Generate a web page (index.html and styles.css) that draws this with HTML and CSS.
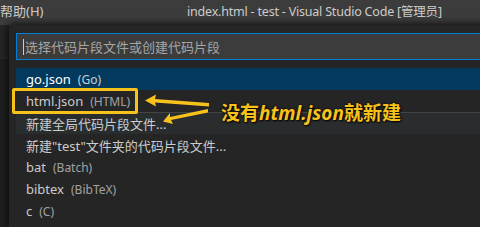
FILE: index.html
```html
<!DOCTYPE html>
<html lang="zh-CN">
<head>
<meta charset="utf-8">
<title>index.html - test - Visual Studio Code</title>
<link rel="stylesheet" href="styles.css">
</head>
<body>
<div class="titlebar">
  <span class="menu">帮助(H)</span>
  <span class="title">index.html - test - Visual Studio Code [管理员]</span>
</div>
<div class="main">
  <div class="editor-strip">
    <div class="tabs"></div>
  </div>
  <div class="quickpick">
    <div class="input"><span class="caret"></span><span class="placeholder">选择代码片段文件或创建代码片段</span></div>
    <ul class="list">
      <li class="row selected"><span class="label">go.json</span><span class="desc">(Go)</span></li>
      <li class="row"><span class="label">html.json</span><span class="desc">(HTML)</span></li>
      <li class="row hover sep"><span class="label">新建全局代码片段文件...</span></li>
      <li class="row"><span class="label">新建"test"文件夹的代码片段文件...</span></li>
      <li class="row"><span class="label">bat</span><span class="desc">(Batch)</span></li>
      <li class="row"><span class="label">bibtex</span><span class="desc">(BibTeX)</span></li>
      <li class="row"><span class="label">c</span><span class="desc">(C)</span></li>
    </ul>
  </div>
</div>
<div class="highlight-box"></div>
<svg class="arrows" width="480" height="227" viewBox="0 0 480 227">
  <polygon points="145,100.5 156,94.5 155,99 209,103 209,106.5 155,102.5 156,106.5" fill="#f8c21c"/>
  <polygon points="163,121.5 170,113 170,117 208,109 208,112.5 171,120 173,124" fill="#f8c21c"/>
</svg>
<div class="note">没有<i>html.json</i>就新建</div>
</body>
</html>
```
FILE: styles.css
```css
html, body {
  margin: 0;
  padding: 0;
}
body {
  width: 480px;
  height: 227px;
  overflow: hidden;
  background: #1e1e1e;
  font-family: "Noto Sans", "Noto Sans CJK SC", sans-serif;
  font-size: 13px;
  color: #cccccc;
  position: relative;
}
.titlebar {
  height: 25px;
  box-sizing: border-box;
  padding-bottom: 4px;
  background: #3c3c3c;
  display: flex;
  align-items: center;
  white-space: nowrap;
  color: #cccccc;
}
.menu {
  flex: none;
  margin-left: 0;
  width: 187px;
}
.title {
  flex: none;
  color: #cccccc;
  font-size: 12.5px;
  letter-spacing: -0.2px;
}
.main {
  display: flex;
  height: 202px;
}
.editor-strip {
  width: 9px;
  flex: none;
  background: #1e1e1e;
}
.tabs {
  height: 33px;
  background: #252526;
  border-bottom: 1px solid #2b2b2b;
}
.quickpick {
  width: 520px;
  flex: none;
  background: #252526;
  box-shadow: 0 0 8px #000;
  padding: 8px 0 0 7px;
  box-sizing: border-box;
}
.input {
  height: 27px;
  box-sizing: border-box;
  background: #3c3c3c;
  border: 1px solid #007fd4;
  display: flex;
  align-items: center;
  padding-left: 6px;
}
.caret {
  width: 1px;
  height: 16px;
  background: #cccccc;
  margin-right: 1px;
}
.placeholder {
  color: #a6a6a6;
}
.list {
  list-style: none;
  margin: 8px 0 0 0;
  padding: 0;
}
.row {
  height: 22px;
  display: flex;
  align-items: center;
  padding-left: 10px;
  white-space: nowrap;
  box-sizing: border-box;
}
.row.selected {
  background: #04395e;
  color: #ffffff;
}
.row.hover {
  background: #2a2d2e;
}
.row.sep {
  border-top: 1px solid #444444;
}
.label {
  color: inherit;
}
.desc {
  margin-left: 7px;
  font-size: 12px;
  opacity: 0.75;
}
.highlight-box {
  position: absolute;
  left: 12px;
  top: 88px;
  width: 126px;
  height: 26px;
  box-sizing: border-box;
  border: 3px solid #f8c21c;
  border-radius: 2px;
}
.arrows {
  position: absolute;
  left: 0;
  top: 0;
}
.note {
  position: absolute;
  left: 221px;
  top: 98px;
  font-size: 19px;
  font-weight: bold;
  color: #f8c21c;
  white-space: nowrap;
  text-shadow: 1px 1px 2px #000, 0 0 2px #000;
  font-family: "Noto Sans CJK SC", sans-serif;
}
.note i {
  font-family: "Noto Sans", sans-serif;
  font-style: italic;
}
```
